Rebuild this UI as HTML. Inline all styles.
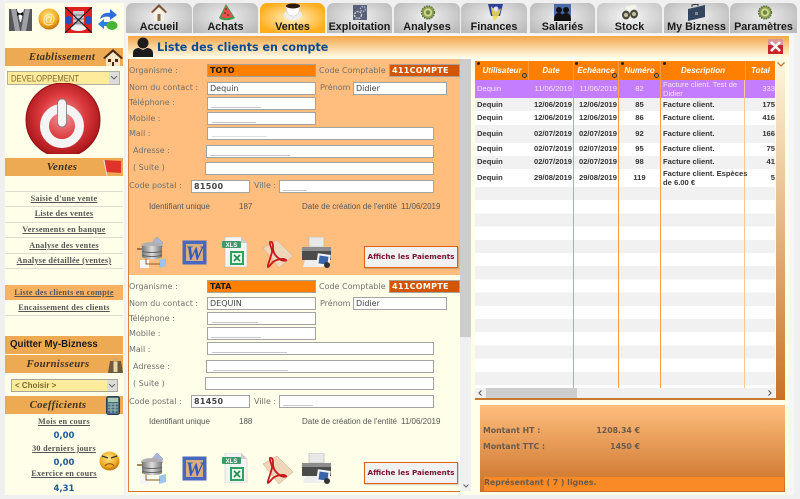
<!DOCTYPE html>
<html lang="fr">
<head>
<meta charset="utf-8">
<title>Liste des clients en compte</title>
<style>
html,body{margin:0;padding:0}
body{width:800px;height:499px;position:relative;overflow:hidden;background:#f0f0f0;font-family:"Liberation Sans",sans-serif}
div,svg,span.a{position:absolute;box-sizing:border-box}
#w{left:0;top:0;width:800px;height:499px;overflow:hidden;filter:blur(.35px)}
.t{white-space:nowrap;line-height:12px;height:12px}
.c{text-align:center}
.bar{left:5px;width:118px;height:18px;background:#eeaa52}
.bt{left:5px;width:118px;text-align:center;font:italic bold 10.8px/18px "Liberation Serif",serif;color:#3d3224;height:18px;letter-spacing:.3px}
.lk{left:5px;width:118px;text-align:center;font:bold 8.2px/12px "Liberation Serif",serif;color:#555;text-decoration:underline;white-space:nowrap;letter-spacing:.25px}
.sep{left:5px;width:118px;height:1px;background:#dcdcd0}
.tab{top:3px;height:30px;width:66px;border-radius:7px 7px 0 0;background:radial-gradient(ellipse 60% 70% at 50% 45%,#f0f0f0,#bcbcbc)}
.tl{left:0;right:0;top:18px;text-align:center;font:bold 10.8px/12px "Liberation Sans",sans-serif;color:#1a1a1a;white-space:nowrap}
.lb{font:8px/12px "DejaVu Sans",sans-serif;color:#707070;white-space:nowrap;height:12px}
.in{background:#fff;border:1px solid #a3a3a3;height:13px;font:8px/11px "DejaVu Sans",sans-serif;color:#444;padding-left:2px;white-space:nowrap;overflow:hidden}
.sm{height:1px;background:#c8c8cc}
.id{font:8px/12px "Liberation Sans",sans-serif;color:#555;white-space:nowrap;height:12px}
.btn{left:364px;width:94px;height:22px;background:#f1f1f1;border:1px solid #de5f16;font:bold 7.2px/20px "DejaVu Sans",sans-serif;color:#7b1230;text-align:center;white-space:nowrap;box-shadow:1px 1px 1px rgba(0,0,0,.2)}
.th{top:61px;height:19px;font:italic bold 8px/19px "Liberation Sans",sans-serif;color:#fff;text-align:center;white-space:nowrap}
.td{font:bold 7.6px/10px "Liberation Sans",sans-serif;color:#333;white-space:nowrap;height:10px}
.r{text-align:right}
.p{color:#f1e6fb;font-weight:normal}
.v{top:80px;height:308px;width:1px;background:#ff9f40}
.m{font:bold 7.8px/10px "DejaVu Sans",sans-serif;color:#6a5a4c;white-space:nowrap;height:10px}
</style>
</head>
<body>
<svg width="0" height="0" style="left:0;top:0">
<defs>
<radialGradient id="gr" cx="50%" cy="45%" r="55%"><stop offset="0" stop-color="#f4989a"/><stop offset=".55" stop-color="#db3a3e"/><stop offset="1" stop-color="#a81418"/></radialGradient>
<radialGradient id="go" cx="45%" cy="35%" r="65%"><stop offset="0" stop-color="#ffe68a"/><stop offset=".7" stop-color="#f0a81e"/><stop offset="1" stop-color="#b86e0a"/></radialGradient>
<linearGradient id="gc" x1="0" x2="1"><stop offset="0" stop-color="#777"/><stop offset=".5" stop-color="#ddd"/><stop offset="1" stop-color="#777"/></linearGradient>
<symbol id="db" viewBox="0 0 30 31"><path d="M13 8 20 0l6 6-5 6z" fill="#a9b5d9" stroke="#7d89b0" stroke-width=".5"/><ellipse cx="15" cy="9" rx="11" ry="4" fill="#b0b0b0"/><path d="M5 9h20v11c-3 3-17 3-20 0z" fill="url(#gc)"/><path d="M5 14c4 2 16 2 20 0M5 18c4 2 16 2 20 0" stroke="#666" fill="none"/><path d="M0 12h5" stroke="#8a5a2a" stroke-width="1.5"/><path d="M3 23h9v8H3z" fill="#f6f6f6"/><path d="M22 23l7-2v8l-7 2z" fill="#9cc4ee"/><path d="M9 22v5h14" stroke="#8a5a2a" fill="none"/></symbol>
<symbol id="word" viewBox="0 0 25 25"><rect x=".5" y=".5" width="24" height="24" fill="#4668bf"/><rect x="4" y="4" width="17" height="17" fill="#d9ad82"/><text x="12.5" y="19.5" text-anchor="middle" font-family="Liberation Serif,serif" font-style="italic" font-weight="bold" font-size="20" fill="#3558b4">W</text></symbol>
<symbol id="xl" viewBox="0 0 26 30"><path d="M3 0h16l6 6v24H3z" fill="#f4f4f4" stroke="#c0c0c0" stroke-width=".5"/><path d="M19 0l6 6h-6z" fill="#ccc"/><rect x="0" y="4" width="19" height="7" rx="1" fill="#3f9a6b"/><text x="9.5" y="10" text-anchor="middle" font-family="Liberation Sans,sans-serif" font-weight="bold" font-size="6" fill="#fff">XLS</text><rect x="8" y="14" width="14" height="14" fill="#2ea35f"/><rect x="10" y="16" width="10" height="10" fill="#e9f6ee"/><path d="M12 18l6 6M18 18l-6 6" stroke="#1b8c4a" stroke-width="1.6"/></symbol>
<symbol id="pdf" viewBox="0 0 30 28"><path d="M0 8 14 0l16 16-14 12z" fill="#eed6b8" stroke="#c7a680" stroke-width=".5"/><path d="M7 2c3-1 3 3 3 6 0 5 3 9 8 12 3 1 6 1 5 0-2-2-9-1-13 2-2 2-4 5-5 5-1-1 3-10 4-15 .5-3-3-8-2-10z" fill="none" stroke="#c8161c" stroke-width="1.8"/></symbol>
<symbol id="pr" viewBox="0 0 30 31"><rect x="7" y="0" width="15" height="10" fill="#e8e8e8" stroke="#aaa" stroke-width=".5"/><path d="M0 10h29v13H0z" fill="#4b4b4b"/><path d="M0 10h29v4H0z" fill="#8d8d8d"/><path d="M3 23h16l3 7H1z" fill="#eee"/><rect x="15" y="17" width="13" height="12" fill="#f4f4f4" transform="rotate(8 21 23)"/><rect x="17" y="19" width="9" height="8" fill="#3a64a8" transform="rotate(8 21 23)"/><circle cx="25" cy="28" r="3" fill="#333"/></symbol>
<symbol id="gear" viewBox="0 0 20 20"><circle cx="10" cy="10" r="8.5" fill="#8aa058" stroke="#5d6f3a" stroke-dasharray="2 1.4" stroke-width="2"/><circle cx="10" cy="10" r="5.5" fill="#d8d98a"/><circle cx="10" cy="10" r="3" fill="#6f8a48"/></symbol>
</defs>
</svg>
<div id="w">

<!-- SIDEBAR -->
<div style="left:5px;top:3px;width:119px;height:492px;background:#fffee8"></div>
<svg style="left:9px;top:9px" width="23" height="22" viewBox="0 0 23 22"><rect width="23" height="22" fill="#fff"/><path d="M0 0h8l3 13 1 0 3-13h8v22H0z" fill="#55555c"/><path d="M2 0h5l4 22H6z" fill="#a0a0a6"/><path d="M21 0h-5l-4 22h5z" fill="#a0a0a6"/><path d="M8 3l3 1.5L14 3v4l-3-1.500L8 7z" fill="#111"/></svg>
<svg style="left:38px;top:8px" width="22" height="22" viewBox="0 0 22 22"><circle cx="11" cy="11" r="10.500" fill="url(#go)"/><text x="11" y="15.500" text-anchor="middle" font-family="Liberation Sans,sans-serif" font-size="13" fill="#fff3c8">@</text></svg>
<svg style="left:65px;top:7px" width="27" height="26" viewBox="0 0 27 26"><rect width="27" height="26" fill="#e01f1f"/><path d="M1 10c4-3 6 1 6 4s-4 5-6 2zM26 10c-4-3-6 1-6 4s4 5 6 2z" fill="#2450b8"/><path d="M8 4h11v17H8z" fill="#c8c8d2"/><path d="M8 8h11M8 12h11M8 16h11" stroke="#777"/><ellipse cx="13.500" cy="21" rx="8" ry="3" fill="#f2f2f2"/><path d="M0 0l27 26M27 0L0 26" stroke="#111" stroke-width="1"/></svg>
<svg style="left:98px;top:9px" width="20" height="22" viewBox="0 0 20 22"><path d="M2 10c1-5 6-7 10-6V0l7 6-7 5V8c-4-1-7 0-10 2z" fill="#2b6fd6"/><path d="M0 15l6-5v3h6v4H6v3z" fill="#2b7fe0"/><ellipse cx="14" cy="16.500" rx="5.500" ry="4.500" fill="#48b335"/></svg>

<div class="bar" style="top:48px"></div>
<div class="bt" style="top:48px;left:3px">Etablissement</div>
<svg style="left:103px;top:48px" width="20" height="18" viewBox="0 0 20 18"><path d="M10 1 0 10l2 1 8-7 8 7 2-1z" fill="#4a2a14"/><path d="M3 10l7-6 7 6v8H3z" fill="#f5e6c8"/><path d="M5 11h3v3H5zM12 11h3v3h-3zM9 14h2v4H9z" fill="#4a2a14"/></svg>

<div style="left:7px;top:71px;width:113px;height:14px;background:#ffeb9c;border:1px solid #b0b0a0"></div>
<svg style="left:7px;top:71px" width="100" height="14"><text x="4" y="10.500" font-family="Liberation Sans,sans-serif" font-size="9" fill="#7a6a30" textLength="68" lengthAdjust="spacingAndGlyphs">DEVELOPPEMENT</text></svg>
<div style="left:109px;top:72px;width:10px;height:12px;background:#dcdcdc"></div>
<svg style="left:110px;top:76px" width="8" height="4" viewBox="0 0 8 4"><path d="M1 0l3 3 3-3" fill="none" stroke="#666"/></svg>

<svg style="left:24px;top:83px" width="78" height="71" viewBox="0 0 78 71"><circle cx="39" cy="37" r="37" fill="url(#gr)" stroke="#8c1014" stroke-width="1"/><circle cx="38" cy="43" r="17.500" fill="none" stroke="#f4f4f4" stroke-width="9"/><rect x="33.500" y="16" width="9" height="28" rx="4.500" fill="#f4f4f4" stroke="#777" stroke-width=".8"/></svg>

<div class="bar" style="top:158px"></div>
<div class="bt" style="top:158px;left:3px">Ventes</div>
<svg style="left:103px;top:159px" width="19" height="18" viewBox="0 0 19 18"><path d="M1 1l17 1v12L3 13z" fill="#e0342a"/><path d="M1 1l3 16" stroke="#e8e0d0"/></svg>

<div class="sep" style="top:191px"></div>
<div class="lk" style="top:193px">Saisie d'une vente</div>
<div class="sep" style="top:206px"></div>
<div class="lk" style="top:208px">Liste des ventes</div>
<div class="sep" style="top:222px"></div>
<div class="lk" style="top:224px">Versements en banque</div>
<div class="sep" style="top:237px"></div>
<div class="lk" style="top:240px">Analyse des ventes</div>
<div class="sep" style="top:253px"></div>
<div class="lk" style="top:255px">Analyse détaillée (ventes)</div>
<div class="sep" style="top:268px"></div>
<div class="bar" style="top:285px;height:15px;background:#f9b261"></div>
<div class="lk" style="top:287px">Liste des clients en compte</div>
<div class="lk" style="top:302px">Encaissement des clients</div>
<div class="sep" style="top:315px"></div>

<div class="bar" style="top:336px"></div>
<div class="t" style="left:10px;top:339px;font:bold 9.700px/12px 'Liberation Sans',sans-serif;color:#1a1a1a">Quitter My-Bizness</div>
<div class="bar" style="top:355px"></div>
<div class="bt" style="top:355px;left:-1px">Fournisseurs</div>
<svg style="left:108px;top:357px" width="15" height="16" viewBox="0 0 15 16"><path d="M2 4h11l2 12H0z" fill="#6e5a3c"/><circle cx="7.500" cy="3" r="2.500" fill="#d8a868"/><path d="M5.500 5h4v10h-4z" fill="#e8d8a8"/></svg>
<div style="left:11px;top:379px;width:107px;height:13px;background:#ffeb9c;border:1px solid #a5a598;font:bold 8px/11px 'Liberation Sans',sans-serif;color:#7a6a30;padding-left:3px;white-space:nowrap">&lt; Choisir &gt;</div>
<div style="left:107px;top:380px;width:10px;height:11px;background:#dcdcdc"></div>
<svg style="left:108px;top:384px" width="8" height="4" viewBox="0 0 8 4"><path d="M1 0l3 3 3-3" fill="none" stroke="#666"/></svg>
<div class="bar" style="top:396px"></div>
<div class="bt" style="top:396px;left:-1px">Coefficients</div>
<svg style="left:106px;top:396px" width="14" height="19" viewBox="0 0 14 19"><rect x=".5" y=".5" width="13" height="18" rx="2" fill="#4a6a80" stroke="#2c3c48"/><rect x="2" y="2" width="10" height="4" fill="#a8c8b0"/><path d="M2 8h10M2 11h10M2 14h10M5 7v10M9 7v10" stroke="#8fb0a8" stroke-width="1.200"/></svg>

<div class="lk" style="top:416px">Mois en cours</div>
<div class="t c" style="left:5px;width:118px;top:430px;font:bold 8.500px/12px 'DejaVu Sans',sans-serif;color:#1a5a9a">0,00</div>
<div class="lk" style="top:443px">30 derniers jours</div>
<div class="t c" style="left:5px;width:118px;top:457px;font:bold 8.500px/12px 'DejaVu Sans',sans-serif;color:#1a5a9a">0,00</div>
<div class="lk" style="top:468px">Exercice en cours</div>
<div class="t c" style="left:5px;width:118px;top:483px;font:bold 8.500px/12px 'DejaVu Sans',sans-serif;color:#1a5a9a">4,31</div>
<svg style="left:99px;top:451px" width="21" height="20" viewBox="0 0 21 20"><ellipse cx="10.500" cy="10" rx="10" ry="9.500" fill="url(#go)"/><path d="M3 5l6 2M18 5l-6 2" stroke="#333" stroke-width="1.300"/><path d="M6 15c2-3 7-3 9 0" fill="none" stroke="#8a4a10" stroke-width="1"/></svg>

<!-- TABS -->
<div class="tab" style="left:126px"><svg style="left:25px;top:1px" width="16" height="17" viewBox="0 0 16 17"><path d="M8 0 0 8l1.500 1L8 3l6.500 6L16 8z" fill="#7a5030"/><path d="M3 8l5-4.500L13 8v9H3z" fill="#f4f0e4"/><rect x="6.500" y="10" width="3" height="7" fill="#8a6a48"/></svg><div class="tl">Accueil</div></div>
<div class="tab" style="left:193px;width:65px"><svg style="left:25px;top:1px" width="17" height="17" viewBox="0 0 17 17"><path d="M8 0 17 14c-5 3-13 3-16 0z" fill="#3f9a4a"/><path d="M8 1.500 15 12.500c-4 2-9 2-12 .5z" fill="#e8504a"/><circle cx="7" cy="9" r=".8" fill="#222"/><circle cx="10" cy="11" r=".8" fill="#222"/><circle cx="8" cy="5" r=".8" fill="#222"/></svg><div class="tl">Achats</div></div>
<div class="tab" style="left:260px;width:65px;background:radial-gradient(ellipse 55% 55% at 50% 50%,#fff3c8,#ffae1e);"><svg style="left:24px;top:0" width="18" height="17" viewBox="0 0 18 17"><ellipse cx="9" cy="12" rx="9" ry="5" fill="#eee"/><path d="M2 2h14c0 8-3 11-7 11S2 10 2 2z" fill="#fff" stroke="#bbb" stroke-width=".5"/><ellipse cx="9" cy="3" rx="7" ry="2.500" fill="#2c1a0e"/></svg><div class="tl">Ventes</div></div>
<div class="tab" style="left:327px;width:65px"><svg style="left:26px;top:2px" width="14" height="15" viewBox="0 0 14 15"><rect width="14" height="15" fill="#5a6078"/><circle cx="5" cy="10" r="3.500" fill="none" stroke="#c8c8c8" stroke-width="1.500" stroke-dasharray="2 1"/><circle cx="10" cy="4" r="2.500" fill="none" stroke="#9cb0d0" stroke-width="1.500" stroke-dasharray="1.500 1"/></svg><div class="tl">Exploitation</div></div>
<div class="tab" style="left:394px"><svg style="left:26px;top:2px" width="16" height="15"><use href="#gear"/></svg><div class="tl">Analyses</div></div>
<div class="tab" style="left:461px"><svg style="left:27px;top:1px" width="15" height="17" viewBox="0 0 15 17"><path d="M0 0h15l-3 12H3z" fill="#2c3e96"/><path d="M3 2c4 5 8 5 10 2-1 7-4 11-7 13-1-3-3-10-3-15z" fill="#f0d850" opacity=".9"/><circle cx="8" cy="5" r="2.500" fill="#e0e0ff"/></svg><div class="tl">Finances</div></div>
<div class="tab" style="left:530px;width:65px"><svg style="left:24px;top:1px" width="17" height="17" viewBox="0 0 17 17"><rect width="17" height="17" fill="#4a6aa8"/><circle cx="5" cy="6" r="3" fill="#111"/><circle cx="12" cy="6" r="3" fill="#111"/><path d="M0 17c0-6 2-8 5-8s5 2 5 8zM7 17c0-6 2-8 5-8s5 2 5 8z" fill="#111"/></svg><div class="tl">Salariés</div></div>
<div class="tab" style="left:597px;width:65px;background:radial-gradient(ellipse 60% 70% at 50% 45%,#f8f8f8,#c6c6c6)"><svg style="left:25px;top:2px" width="16" height="15" viewBox="0 0 16 15"><ellipse cx="4" cy="10" rx="4" ry="4.500" fill="#4c4a3c"/><ellipse cx="12" cy="9" rx="4" ry="4.500" fill="#4c4a3c"/><path d="M4 1l10-1 1 4-10 2z" fill="#f4f4ee"/><circle cx="4" cy="10" r="2" fill="#c8c0a0"/><circle cx="12" cy="9" r="2" fill="#c8c0a0"/></svg><div class="tl">Stock</div></div>
<div class="tab" style="left:664px;width:65px"><svg style="left:24px;top:1px" width="17" height="17" viewBox="0 0 17 17"><path d="M0 5l17-4v12L0 17z" fill="#33465e"/><path d="M4 3V1l6-1v2" fill="none" stroke="#222"/><rect x="7" y="8" width="3" height="3" fill="#889"/></svg><div class="tl">My Bizness</div></div>
<div class="tab" style="left:730px;width:67px"><svg style="left:27px;top:2px" width="16" height="15"><use href="#gear"/></svg><div class="tl">Paramètres</div></div>

<!-- MAIN PANEL -->
<div style="left:126px;top:34px;width:668px;height:461px;background:#f6f6f6"></div>
<div style="left:128px;top:36px;width:661px;height:459px;background:#fffee8"></div>
<div style="left:128px;top:36px;width:661px;height:22px;background:linear-gradient(#f3a64a,#fffde8)"></div>
<svg style="left:133px;top:37px" width="20" height="20" viewBox="0 0 20 20"><circle cx="10" cy="6" r="5.500" fill="#1c1c1c"/><path d="M0 20v-4c0-4 4-5 6-5l4 2 4-2c2 0 6 1 6 5v4z" fill="#1c1c1c"/></svg>
<div class="t" style="left:157px;top:41px;height:13px;font:bold 11.100px/13px 'DejaVu Sans',sans-serif;color:#0b4a8f">Liste des clients en compte</div>
<svg style="left:768px;top:39px" width="15" height="15" viewBox="0 0 15 15"><rect width="15" height="15" fill="#c8242c"/><rect width="15" height="6" fill="#e4e4e4" opacity=".6"/><path d="M3 3l9 9M12 3l-9 9" stroke="#fff" stroke-width="2.600"/></svg>

<!-- LEFT LIST -->
<div style="left:128px;top:59px;width:332px;height:216px;background:#ffbe7d;border-left:1px solid #d8833e"></div>
<div style="left:128px;top:275px;width:332px;height:217px;background:#fffee8;border-left:1px solid #d8833e;border-bottom:1px solid #d8702a"></div>
<div style="left:460px;top:59px;width:11px;height:432px;background:#f0f0f0"></div>
<div style="left:460px;top:59px;width:11px;height:278px;background:#cdcdcd"></div>
<svg style="left:463px;top:484px" width="6" height="4" viewBox="0 0 6 4"><path d="M.5.500 3 3 5.500.5" fill="none" stroke="#666"/></svg>

<!-- Record 1 -->
<div class="lb" style="left:129px;top:65px">Organisme :</div>
<div class="in" style="left:207px;top:64px;width:109px;background:#ff8000;font-weight:bold;color:#1a1a1a">TOTO</div>
<div class="lb" style="left:319px;top:65px">Code Comptable</div>
<div class="in" style="left:389px;top:64px;width:71px;background:#d45500;font-weight:bold;color:#fff;letter-spacing:.3px">411COMPTE</div>
<div class="lb" style="left:129px;top:82px">Nom du contact :</div>
<div class="in" style="left:207px;top:82px;width:109px">Dequin</div>
<div class="lb" style="left:320px;top:82px">Prénom</div>
<div class="in" style="left:353px;top:82px;width:94px">Didier</div>
<div class="lb" style="left:129px;top:97px">Téléphone :</div>
<div class="in" style="left:207px;top:97px;width:109px"><div class="sm" style="left:3px;top:9px;width:50px"></div></div>
<div class="lb" style="left:129px;top:113px">Mobile :</div>
<div class="in" style="left:207px;top:112px;width:109px"><div class="sm" style="left:4px;top:9px;width:44px"></div></div>
<div class="lb" style="left:129px;top:128px">Mail :</div>
<div class="in" style="left:207px;top:127px;width:227px"><div class="sm" style="left:4px;top:8px;width:55px;background:#e0e0e0"></div></div>
<div class="lb" style="left:133px;top:145px">Adresse :</div>
<div class="in" style="left:206px;top:145px;width:228px"><div class="sm" style="left:3px;top:9px;width:80px"></div></div>
<div class="lb" style="left:133px;top:162px">( Suite )</div>
<div class="in" style="left:205px;top:162px;width:229px"></div>
<div class="lb" style="left:129px;top:180px">Code postal :</div>
<div class="in" style="left:191px;top:180px;width:59px;font-weight:bold;letter-spacing:.3px">81500</div>
<div class="lb" style="left:254px;top:180px">Ville :</div>
<div class="in" style="left:279px;top:180px;width:155px"><div class="sm" style="left:3px;top:9px;width:24px"></div></div>
<div class="id" style="left:149px;top:201px">Identifiant unique</div>
<div class="id" style="left:239px;top:201px">187</div>
<div class="id" style="left:302px;top:201px">Date de création de l'entité</div>
<div class="id" style="left:401px;top:201px">11/06/2019</div>
<svg style="left:137px;top:237px" width="30" height="31"><use href="#db"/></svg>
<svg style="left:182px;top:240px" width="25" height="25"><use href="#word"/></svg>
<svg style="left:222px;top:237px" width="26" height="30"><use href="#xl"/></svg>
<svg style="left:263px;top:240px" width="30" height="28"><use href="#pdf"/></svg>
<svg style="left:302px;top:237px" width="30" height="31"><use href="#pr"/></svg>
<div class="btn" style="top:246px">Affiche les Paiements</div>

<!-- Record 2 -->
<div class="lb" style="left:129px;top:281px">Organisme :</div>
<div class="in" style="left:207px;top:280px;width:109px;background:#ff8000;font-weight:bold;color:#1a1a1a">TATA</div>
<div class="lb" style="left:319px;top:281px">Code Comptable</div>
<div class="in" style="left:389px;top:280px;width:71px;background:#d45500;font-weight:bold;color:#fff;letter-spacing:.3px">411COMPTE</div>
<div class="lb" style="left:129px;top:298px">Nom du contact :</div>
<div class="in" style="left:207px;top:297px;width:109px">DEQUIN</div>
<div class="lb" style="left:320px;top:298px">Prénom</div>
<div class="in" style="left:353px;top:297px;width:94px">Didier</div>
<div class="lb" style="left:129px;top:313px">Téléphone :</div>
<div class="in" style="left:207px;top:312px;width:109px"><div class="sm" style="left:4px;top:9px;width:46px"></div></div>
<div class="lb" style="left:129px;top:328px">Mobile :</div>
<div class="in" style="left:207px;top:327px;width:109px"><div class="sm" style="left:3px;top:9px;width:50px"></div></div>
<div class="lb" style="left:129px;top:344px">Mail :</div>
<div class="in" style="left:207px;top:342px;width:227px"><div class="sm" style="left:4px;top:9px;width:75px"></div></div>
<div class="lb" style="left:133px;top:361px">Adresse :</div>
<div class="in" style="left:206px;top:360px;width:228px"><div class="sm" style="left:6px;top:9px;width:75px"></div></div>
<div class="lb" style="left:133px;top:378px">( Suite )</div>
<div class="in" style="left:205px;top:377px;width:229px"></div>
<div class="lb" style="left:129px;top:396px">Code postal :</div>
<div class="in" style="left:191px;top:395px;width:59px;font-weight:bold;letter-spacing:.3px">81450</div>
<div class="lb" style="left:254px;top:396px">Ville :</div>
<div class="in" style="left:279px;top:395px;width:155px"><div class="sm" style="left:3px;top:9px;width:30px"></div></div>
<div class="id" style="left:149px;top:416px">Identifiant unique</div>
<div class="id" style="left:239px;top:416px">188</div>
<div class="id" style="left:302px;top:416px">Date de création de l'entité</div>
<div class="id" style="left:401px;top:416px">11/06/2019</div>
<svg style="left:137px;top:453px" width="30" height="31"><use href="#db"/></svg>
<svg style="left:182px;top:456px" width="25" height="25"><use href="#word"/></svg>
<svg style="left:222px;top:453px" width="26" height="30"><use href="#xl"/></svg>
<svg style="left:263px;top:456px" width="30" height="28"><use href="#pdf"/></svg>
<svg style="left:302px;top:453px" width="30" height="31"><use href="#pr"/></svg>
<div class="btn" style="top:462px">Affiche les Paiements</div>

<!-- RIGHT TABLE -->
<div style="left:776px;top:60px;width:9px;height:340px;background:linear-gradient(#fff6dc,#c87428)"></div>
<svg style="left:777px;top:62px" width="8" height="5" viewBox="0 0 8 5"><path d="M.5.500 4 4 7.500.5" fill="none" stroke="#c87830" stroke-width="1.300"/></svg>
<div style="left:475px;top:187px;width:300px;height:201px;background:repeating-linear-gradient(#f1f1f1 0,#f1f1f1 13.200px,#fff 13.200px,#fff 26.400px)"></div>
<div style="left:475px;top:61px;width:300px;height:19px;background:#ff8000"></div>
<div style="left:475px;top:80px;width:300px;height:18px;background:#c57dff"></div>
<div style="left:475px;top:98px;width:300px;height:13px;background:#f1f1f1"></div>
<div style="left:475px;top:111px;width:300px;height:14px;background:#fff"></div>
<div style="left:475px;top:125px;width:300px;height:18px;background:#f1f1f1"></div>
<div style="left:475px;top:143px;width:300px;height:13px;background:#fff"></div>
<div style="left:475px;top:156px;width:300px;height:13px;background:#f1f1f1"></div>
<div style="left:475px;top:169px;width:300px;height:18px;background:#fff"></div>
<div class="v" style="left:573px"></div>
<div class="v" style="left:618px"></div>
<div class="v" style="left:660px"></div>
<div class="v" style="left:744px;background:#ffc890"></div>
<div style="left:528px;top:61px;width:1px;height:19px;background:#ff9a38"></div>
<div style="left:573px;top:61px;width:1px;height:19px;background:#ff9a38"></div>
<div style="left:618px;top:61px;width:1px;height:19px;background:#ff9a38"></div>
<div style="left:660px;top:61px;width:1px;height:19px;background:#ff9a38"></div>
<div style="left:745px;top:61px;width:1px;height:19px;background:#ff9a38"></div>

<div class="th" style="left:476px;width:52px">Utilisateur</div>
<div class="th" style="left:529px;width:44px">Date</div>
<div class="th" style="left:574px;width:44px">Echéance</div>
<div class="th" style="left:619px;width:41px">Numéro</div>
<div class="th" style="left:661px;width:84px">Description</div>
<div class="th" style="left:746px;width:29px">Total</div>
<div style="left:477px;top:62px;width:3px;height:3px;border-radius:50%;background:#222"></div>
<div style="left:575px;top:62px;width:3px;height:3px;border-radius:50%;background:#222"></div>
<div style="left:621px;top:62px;width:3px;height:3px;border-radius:50%;background:#222"></div>
<div style="left:663px;top:62px;width:3px;height:3px;border-radius:50%;background:#222"></div>
<div style="left:522px;top:73px;width:5px;height:5px;border-radius:50%;border:1px solid #333"></div>
<div style="left:612px;top:73px;width:5px;height:5px;border-radius:50%;border:1px solid #333"></div>
<div style="left:654px;top:73px;width:5px;height:5px;border-radius:50%;border:1px solid #333"></div>

<!-- rows -->
<div class="td p" style="left:477px;top:84px">Dequin</div>
<div class="td p r" style="left:525px;width:47px;top:84px">11/06/2019</div>
<div class="td p r" style="left:570px;width:47px;top:84px">11/06/2019</div>
<div class="td p c" style="left:619px;width:41px;top:84px">82</div>
<div class="td p" style="left:663px;top:80px;line-height:9px;height:9px">Facture client. Test de</div>
<div class="td p" style="left:663px;top:89px;line-height:9px;height:9px">Didier</div>
<div class="td p r" style="left:746px;width:29px;top:84px">333</div>

<div class="td" style="left:477px;top:100px">Dequin</div>
<div class="td r" style="left:525px;width:47px;top:100px">12/06/2019</div>
<div class="td r" style="left:570px;width:47px;top:100px">12/06/2019</div>
<div class="td c" style="left:619px;width:41px;top:100px">85</div>
<div class="td" style="left:663px;top:100px">Facture client.</div>
<div class="td r" style="left:746px;width:29px;top:100px">175</div>

<div class="td" style="left:477px;top:113px">Dequin</div>
<div class="td r" style="left:525px;width:47px;top:113px">12/06/2019</div>
<div class="td r" style="left:570px;width:47px;top:113px">12/06/2019</div>
<div class="td c" style="left:619px;width:41px;top:113px">86</div>
<div class="td" style="left:663px;top:113px">Facture client.</div>
<div class="td r" style="left:746px;width:29px;top:113px">416</div>

<div class="td" style="left:477px;top:129px">Dequin</div>
<div class="td r" style="left:525px;width:47px;top:129px">02/07/2019</div>
<div class="td r" style="left:570px;width:47px;top:129px">02/07/2019</div>
<div class="td c" style="left:619px;width:41px;top:129px">92</div>
<div class="td" style="left:663px;top:129px">Facture client.</div>
<div class="td r" style="left:746px;width:29px;top:129px">166</div>

<div class="td" style="left:477px;top:144px">Dequin</div>
<div class="td r" style="left:525px;width:47px;top:144px">02/07/2019</div>
<div class="td r" style="left:570px;width:47px;top:144px">02/07/2019</div>
<div class="td c" style="left:619px;width:41px;top:144px">95</div>
<div class="td" style="left:663px;top:144px">Facture client.</div>
<div class="td r" style="left:746px;width:29px;top:144px">75</div>

<div class="td" style="left:477px;top:157px">Dequin</div>
<div class="td r" style="left:525px;width:47px;top:157px">02/07/2019</div>
<div class="td r" style="left:570px;width:47px;top:157px">02/07/2019</div>
<div class="td c" style="left:619px;width:41px;top:157px">98</div>
<div class="td" style="left:663px;top:157px">Facture client.</div>
<div class="td r" style="left:746px;width:29px;top:157px">41</div>

<div class="td" style="left:477px;top:173px">Dequin</div>
<div class="td r" style="left:525px;width:47px;top:173px">29/08/2019</div>
<div class="td r" style="left:570px;width:47px;top:173px">29/08/2019</div>
<div class="td c" style="left:619px;width:41px;top:173px">119</div>
<div class="td" style="left:663px;top:169px;line-height:9px;height:9px">Facture client. Espèces</div>
<div class="td" style="left:663px;top:178px;line-height:9px;height:9px">de 6.00 €</div>
<div class="td r" style="left:746px;width:29px;top:173px">5</div>

<!-- horizontal scrollbar -->
<div style="left:475px;top:388px;width:300px;height:10px;background:#f0f0f0"></div>
<div style="left:486px;top:388px;width:91px;height:10px;background:#cdcdcd"></div>
<svg style="left:478px;top:390px" width="4" height="6" viewBox="0 0 4 6"><path d="M3.500.5 1 3l2.500 2.500" fill="none" stroke="#555"/></svg>
<svg style="left:768px;top:390px" width="4" height="6" viewBox="0 0 4 6"><path d="M.5.500 3 3 .5 5.500" fill="none" stroke="#555"/></svg>
<div style="left:475px;top:398px;width:301px;height:2px;background:#c87830"></div>

<!-- totals -->
<div style="left:480px;top:405px;width:305px;height:87px;background:linear-gradient(#ffbe7d,#c87028)"></div>
<div style="left:484px;top:477px;width:300px;height:14px;background:#f98a25"></div>
<div class="m" style="left:483px;top:426px">Montant HT :</div>
<div class="m r" style="left:570px;width:70px;top:426px">1208.34 €</div>
<div class="m" style="left:483px;top:442px">Montant TTC :</div>
<div class="m r" style="left:570px;width:70px;top:442px">1450 €</div>
<div class="m" style="left:484px;top:478px">Représentant ( 7 ) lignes.</div>
</div>
</body>
</html>
